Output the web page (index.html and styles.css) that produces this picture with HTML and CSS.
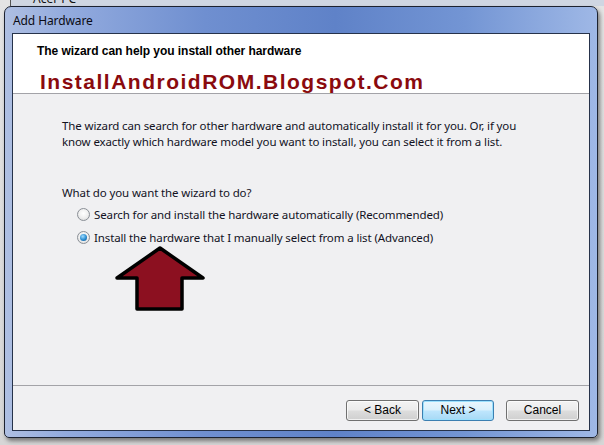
FILE: index.html
```html
<!DOCTYPE html>
<html>
<head>
<meta charset="utf-8">
<link rel="stylesheet" href="styles.css">
</head>
<body>
<div class="desk">
  <div class="behind"><span class="behind-title">Acer PC</span></div>
  <div class="win">
    <div class="titlebar">Add Hardware</div>
    <div class="client">
      <div class="header">
        <div class="htitle">The wizard can help you install other hardware</div>
        <div class="brand">InstallAndroidROM.Blogspot.Com</div>
      </div>
      <div class="content">
        <p class="intro">The wizard can search for other hardware and automatically install it for you. Or, if you<br>know exactly which hardware model you want to install, you can select it from a list.</p>
        <p class="question">What do you want the wizard to do?</p>
        <div class="opt"><span class="radio"></span><span>Search for and install the hardware automatically (Recommended)</span></div>
        <div class="opt"><span class="radio on"></span><span>Install the hardware that I manually select from a list (Advanced)</span></div>
        <svg class="arrow" width="94" height="68" viewBox="0 0 94 68">
          <polygon points="46,3 89,33 68,33 68,64 23,64 23,33 3,33" fill="#8c1020" stroke="#000" stroke-width="3.5" stroke-linejoin="round"/>
        </svg>
      </div>
      <div class="footer">
        <button class="btn">&lt; Back</button>
        <button class="btn next">Next &gt;</button>
        <button class="btn cancel">Cancel</button>
      </div>
    </div>
  </div>
</div>
</body>
</html>
```
FILE: styles.css
```css
html, body {
  margin: 0;
  padding: 0;
}
body {
  width: 604px;
  height: 445px;
  overflow: hidden;
  background: #d9d9d9;
}
.desk {
  width: 604px;
  height: 445px;
  background: linear-gradient(180deg, #e4e4e4, #d6d6d6);
}
.behind {
  height: 6px;
  overflow: hidden;
  border-left: 1px solid #555;
  margin-left: 10px;
  background: #cfd6e2;
}
.behind-title {
  display: block;
  margin-top: -10px;
  margin-left: 22px;
  font: 12px "Noto Sans", sans-serif;
  color: #111;
}
.win {
  margin-left: 4px;
  width: 592px;
  height: 430px;
  border: 1px solid #1c2230;
  border-radius: 7px 7px 5px 5px;
  display: flex;
  flex-direction: column;
  background:
    linear-gradient(90deg, #aebfe2 0px, #93abde 60px, #6f8fd0 200px, #5f82c8 330px, #7395d4 460px, #9fb8e6 592px);
  box-shadow: 2px 3px 4px rgba(0,0,0,0.45);
}
.titlebar {
  height: 26px;
  padding-left: 8px;
  font: 12px/28px "Noto Sans", sans-serif;
  color: #0b0b14;
  letter-spacing: -0.1px;
}
.client {
  margin: 0 7px 6px 7px;
  border: 1px solid #26324a;
  height: 396px;
  display: flex;
  flex-direction: column;
  background: #f0f0f2;
}
.header {
  background: #fff;
  border-bottom: 1px solid #a3a3a8;
  padding: 10px 0 0 24px;
  box-sizing: border-box;
  height: 60px;
}
.htitle {
  font: bold 12px/14px "Liberation Sans", Arial, sans-serif;
  color: #000;
  letter-spacing: -0.05px;
}
.brand {
  margin: 12px 0 0 3px;
  font: bold 21px/24px "Liberation Sans", Arial, sans-serif;
  color: #8a0a0e;
  letter-spacing: 1.5px;
}
.content {
  flex: 1;
  padding: 24px 0 0 49px;
  font: 11.5px/16px "Noto Sans", sans-serif;
  letter-spacing: -0.12px;
  color: #12121e;
}
.content p {
  margin: 0;
}
.question {
  margin-top: 35px !important;
}
.opt {
  display: flex;
  align-items: center;
  height: 23px;
  margin-left: 15px;
}
.opt:first-of-type {
  margin-top: 2px;
}
.radio {
  width: 11px;
  height: 11px;
  border-radius: 50%;
  border: 1px solid #8a8f96;
  background: radial-gradient(circle at 50% 40%, #fff 0%, #f0f0f0 50%, #d5d5d5 100%);
  margin-right: 4px;
  flex: none;
  position: relative;
}
.radio.on::after {
  content: "";
  position: absolute;
  left: 2px;
  top: 2px;
  width: 7px;
  height: 7px;
  border-radius: 50%;
  background: radial-gradient(circle at 40% 35%, #9fdcff 0%, #2a8cd0 55%, #0d4a86 100%);
}
.arrow {
  display: block;
  margin: -4px 0 0 52px;
}
.footer {
  height: 45px;
  border-top: 1px solid #a3a3a8;
  box-sizing: border-box;
  display: flex;
  justify-content: flex-end;
  align-items: flex-start;
  padding: 14px 10px 0 0;
}
.btn {
  width: 73px;
  height: 21px;
  margin: 0;
  padding: 0;
  border: 1px solid #707070;
  border-radius: 3px;
  background: linear-gradient(180deg, #f3f3f3 0%, #ebebeb 48%, #dddddd 52%, #cfcfcf 100%);
  font: 12px/19px "Liberation Sans", Arial, sans-serif;
  color: #000;
  box-shadow: inset 0 0 0 1px rgba(255,255,255,0.7);
}
.next {
  width: 72px;
  margin-left: 3px;
  border-color: #3c7fb1;
  background: linear-gradient(180deg, #eaf6fd 0%, #d9f0fc 48%, #bee6fd 52%, #a7d9f5 100%);
  box-shadow: inset 0 0 0 1px #9be0fd;
}
.cancel {
  margin-left: 12px;
}
```
